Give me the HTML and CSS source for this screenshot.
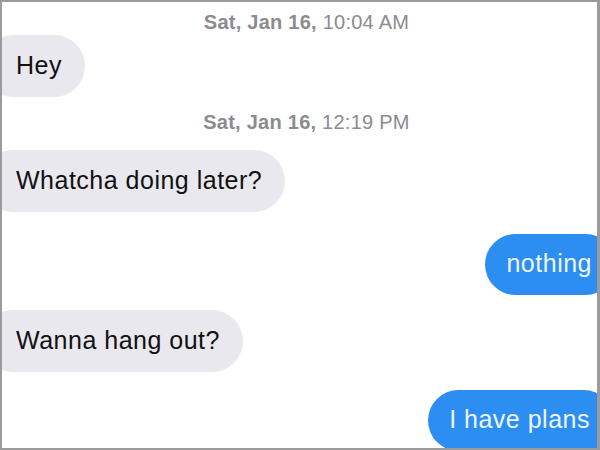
FILE: index.html
```html
<!DOCTYPE html>
<html lang="en">
<head>
<meta charset="utf-8">
<title>Messages</title>
<link rel="stylesheet" href="styles.css">
</head>
<body>
<div class="frame">
  <div class="thread">
    <div class="stamp stamp-first"><b>Sat, Jan 16,</b> 10:04 AM</div>
    <div class="bubble in b-hey">Hey</div>
    <div class="stamp stamp-second"><b>Sat, Jan 16,</b> 12:19 PM</div>
    <div class="bubble in b-whatcha">Whatcha doing later?</div>
    <div class="bubble out b-nothing">nothing</div>
    <div class="bubble in b-wanna">Wanna hang out?</div>
    <div class="bubble out b-plans">I have plans</div>
  </div>
</div>
</body>
</html>
```

FILE: styles.css
```css
html, body {
  margin: 0;
  padding: 0;
  background: #ffffff;
}

.frame {
  box-sizing: border-box;
  width: 600px;
  height: 450px;
  border-style: solid;
  border-color: #9b9b9b;
  border-width: 2px 3px 2px 2px;
  overflow: hidden;
  background: #ffffff;
}

.thread {
  display: flex;
  flex-direction: column;
  align-items: flex-start;
  font-family: "Liberation Sans", Arial, sans-serif;
}

.stamp {
  align-self: stretch;
  text-align: center;
  font-size: 20px;
  line-height: 24px;
  letter-spacing: 0.25px;
  color: #8b8b90;
  padding-left: 14px;
}

.stamp b {
  font-weight: 700;
}

.stamp-first {
  margin-top: 8px;
}

.stamp-second {
  margin-top: 13px;
}

.bubble {
  font-size: 25px;
  line-height: 30px;
  letter-spacing: 0.5px;
  padding: 15px 23px 17px 34px;
  border-radius: 31px;
  white-space: nowrap;
}

.in {
  background: #e8e8ee;
  color: #111111;
  margin-left: -20px;
}

.out {
  align-self: flex-end;
  background: #2c8ef1;
  color: #eef6ff;
  padding-left: 21px;
  padding-right: 24px;
  margin-right: -17px;
}

.b-hey {
  margin-top: 1px;
}

.b-whatcha {
  margin-top: 16px;
}

.b-nothing {
  margin-top: 22px;
  margin-right: -19px;
  padding-top: 14px;
}

.b-wanna {
  margin-top: 15px;
}

.b-plans {
  margin-top: 18px;
  padding-top: 14px;
}
```
